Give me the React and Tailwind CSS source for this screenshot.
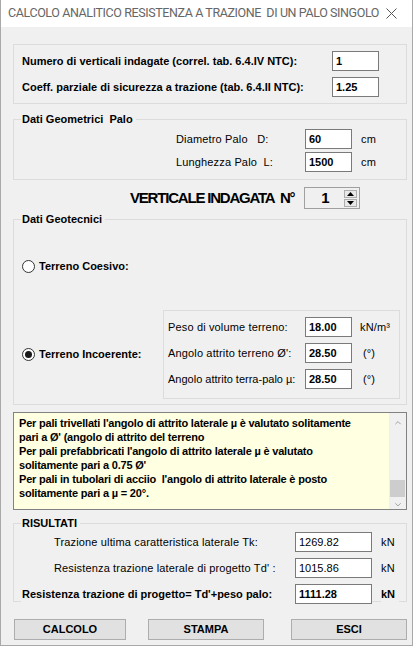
import { ChevronUp, ChevronDown } from "lucide-react";

const Field = ({ value, bold = true, wide = false }) => (
  <div
    className={`${wide ? "w-[77px]" : "w-[47px]"} h-[20px] shrink-0 border border-[#7a7a7a] bg-white pl-[3px] text-[11px] leading-[18px] ${bold ? "font-bold" : ""}`}
  >
    {value}
  </div>
);

const GroupBox = ({ title, className = "", children }) => (
  <div className={`flex w-[394px] flex-col border border-[#dcdcdc] ${className}`}>
    {title && (
      <span className="-mt-[7px] ml-[7px] self-start bg-[#f0f0f0] pl-[1px] pr-[3px] text-[11px] font-bold leading-[13px]">
        {title}
      </span>
    )}
    {children}
  </div>
);

const Radio = ({ checked, label }) => (
  <div className="flex items-center">
    <span className="flex h-[13px] w-[13px] items-center justify-center rounded-full border border-[#333] bg-white">
      {checked && <span className="h-[7px] w-[7px] rounded-full bg-[#1a1a1a]" />}
    </span>
    <span className="ml-[4px] text-[11px] font-bold leading-[13px]">{label}</span>
  </div>
);

const Button = ({ label, className = "" }) => (
  <button
    className={`h-[21px] border border-[#adadad] bg-[#e1e1e1] text-[11px] font-bold leading-[19px] text-black ${className}`}
  >
    {label}
  </button>
);

// plain labels are drawn slightly spaced out, like the old dialog font
const Label = ({ className = "", children }) => (
  <span className={`whitespace-pre text-[11px] tracking-[0.15px] ${className}`}>{children}</span>
);

const notes = [
  "Per pali trivellati l'angolo di attrito laterale µ è valutato solitamente",
  "pari a Ø' (angolo di attrito del terreno",
  "Per pali prefabbricati l'angolo di attrito laterale µ è valutato",
  "solitamente pari a 0.75 Ø'",
  "Per pali in tubolari di acciio  l'angolo di attrito laterale è posto",
  "solitamente pari a µ = 20°.",
];

export default function App() {
  return (
    <div className="h-[647px] w-[414px] bg-white font-['Liberation_Sans',Arial,sans-serif] text-black">
      <div className="flex h-[646px] w-[413px] flex-col border-x border-b border-[#a9a9a9] bg-[#f0f0f0]">
        {/* title bar */}
        <div className="flex h-[27px] shrink-0 items-center bg-white pl-[7px]">
          <span className="whitespace-nowrap font-['Roboto',sans-serif] text-[12.5px] tracking-[-0.4px] text-[#666]">
            CALCOLO ANALITICO RESISTENZA A TRAZIONE&nbsp; DI UN PALO SINGOLO
          </span>
          <svg className="ml-auto mr-[15px] shrink-0" width="11" height="11" viewBox="0 0 11 11">
            <path d="M0.5 0.5 L10.5 10.5 M10.5 0.5 L0.5 10.5" stroke="#555" strokeWidth="1" />
          </svg>
        </div>

        <div className="flex flex-col pl-[12px]">
          {/* coefficients */}
          <GroupBox className="mt-[17px] gap-[6px] py-[6px]">
            <div className="flex items-center pl-[8px]">
              <span className="w-[310px] text-[11px] font-bold">
                Numero di verticali indagate (correl. tab. 6.4.IV NTC):
              </span>
              <Field value="1" />
            </div>
            <div className="flex items-center pl-[8px]">
              <span className="w-[310px] text-[11px] font-bold">
                Coeff. parziale di sicurezza a trazione (tab. 6.4.II NTC):
              </span>
              <Field value="1.25" />
            </div>
          </GroupBox>

          {/* pile geometry */}
          <GroupBox title="Dati Geometrici  Palo" className="mt-[15px] gap-[3px] pb-[7px] whitespace-pre">
            <div className="flex items-center pl-[162px]">
              <Label className="w-[129px]">Diametro Palo   D:</Label>
              <Field value="60" />
              <Label className="ml-[9px]">cm</Label>
            </div>
            <div className="flex items-center pl-[162px]">
              <Label className="w-[129px]">Lunghezza Palo  L:</Label>
              <Field value="1500" />
              <Label className="ml-[9px]">cm</Label>
            </div>
          </GroupBox>

          {/* vertical selector */}
          <div className="mt-[7px] flex h-[22px] items-center pl-[117px]">
            <span className="whitespace-pre text-[15px] font-bold tracking-[-1.2px]">VERTICALE INDAGATA  N°</span>
            <div className="ml-[10px] flex h-[22px] w-[56px] shrink-0 items-center border border-[#a0a0a0] bg-[#f0f0f0]">
              <span className="ml-[16px] text-[15px] font-bold leading-[20px]">1</span>
              <div className="ml-auto mr-[2px] flex flex-col gap-[1px]">
                <span className="flex h-[8px] w-[13px] items-center justify-center border border-[#adadad] bg-[#e8e8e8]">
                  <svg width="7" height="4" viewBox="0 0 7 4">
                    <path d="M0 4 L3.5 0 L7 4 Z" fill="#000" />
                  </svg>
                </span>
                <span className="flex h-[8px] w-[13px] items-center justify-center border border-[#adadad] bg-[#e8e8e8]">
                  <svg width="7" height="4" viewBox="0 0 7 4">
                    <path d="M0 0 L3.5 4 L7 0 Z" fill="#000" />
                  </svg>
                </span>
              </div>
            </div>
          </div>

          {/* soil data */}
          <GroupBox title="Dati Geotecnici" className="mt-[10px] pb-[5px]">
            <div className="mt-[34px] pl-[8px]">
              <Radio label="Terreno Coesivo:" />
            </div>
            <div className="mt-[37px] flex items-center pl-[8px] pr-[6px]">
              <Radio checked label="Terreno Incoerente:" />
              <div className="ml-auto flex h-[89px] w-[237px] flex-col gap-[6px] border border-[#dcdcdc] pl-[4px] pt-[6px]">
                <div className="flex items-center">
                  <Label className="w-[137px]">Peso di volume terreno:</Label>
                  <Field value="18.00" />
                  <Label className="ml-[8px]">kN/m³</Label>
                </div>
                <div className="flex items-center">
                  <Label className="w-[137px]">Angolo attrito terreno Ø':</Label>
                  <Field value="28.50" />
                  <Label className="ml-[11px]">(°)</Label>
                </div>
                <div className="flex items-center">
                  <Label className="w-[137px] tracking-[0px]">Angolo attrito terra-palo µ:</Label>
                  <Field value="28.50" />
                  <Label className="ml-[11px]">(°)</Label>
                </div>
              </div>
            </div>
          </GroupBox>

          {/* notes box */}
          <div className="mt-[7px] flex h-[98px] w-[394px] border border-[#828282] bg-[#ffffe1]">
            <div className="flex-1 pl-[5px] pt-[3px] text-[11px] font-bold leading-[14px] tracking-[-0.2px]">
              {notes.map((line) => (
                <div key={line} className="whitespace-pre">
                  {line}
                </div>
              ))}
            </div>
            <div className="flex w-[17px] flex-col items-center bg-[#f0f0f0]">
              <ChevronUp className="mt-[5px] h-[10px] w-[10px] text-[#a0a0a0]" strokeWidth={2.5} />
              <div className="mt-[53px] h-[17px] w-[15px] bg-[#cdcdcd]" />
              <ChevronDown className="mt-[3px] h-[10px] w-[10px] text-[#a0a0a0]" strokeWidth={2.5} />
            </div>
          </div>

          {/* results */}
          <GroupBox title="RISULTATI" className="mt-[13px]">
            <div className="mt-[2px] flex items-center pl-[40px]">
              <Label className="w-[241px]">Trazione ultima caratteristica laterale Tk:</Label>
              <Field value="1269.82" bold={false} wide />
              <Label className="ml-[9px]">kN</Label>
            </div>
            <div className="mt-[6px] flex items-center pl-[40px]">
              <Label className="w-[241px]">Resistenza trazione laterale di progetto Td' :</Label>
              <Field value="1015.86" bold={false} wide />
              <Label className="ml-[9px]">kN</Label>
            </div>
            <div className="relative z-10 mt-[6px] -mb-[3px] flex items-center pl-[7px]">
              <span className="w-[274px] bg-[#f0f0f0] pl-[1px] text-[11px] font-bold">
                Resistenza trazione di progetto= Td'+peso palo:
              </span>
              <Field value="1111.28" wide />
              <span className="ml-[9px] bg-[#f0f0f0] pr-[4px] text-[11px] font-bold">kN</span>
            </div>
          </GroupBox>

          {/* actions */}
          <div className="mt-[17px] flex">
            <Button label="CALCOLO" className="ml-[1px] w-[112px]" />
            <Button label="STAMPA" className="ml-[22px] w-[116px]" />
            <Button label="ESCI" className="ml-[27px] w-[116px]" />
          </div>
        </div>
      </div>
    </div>
  );
}
